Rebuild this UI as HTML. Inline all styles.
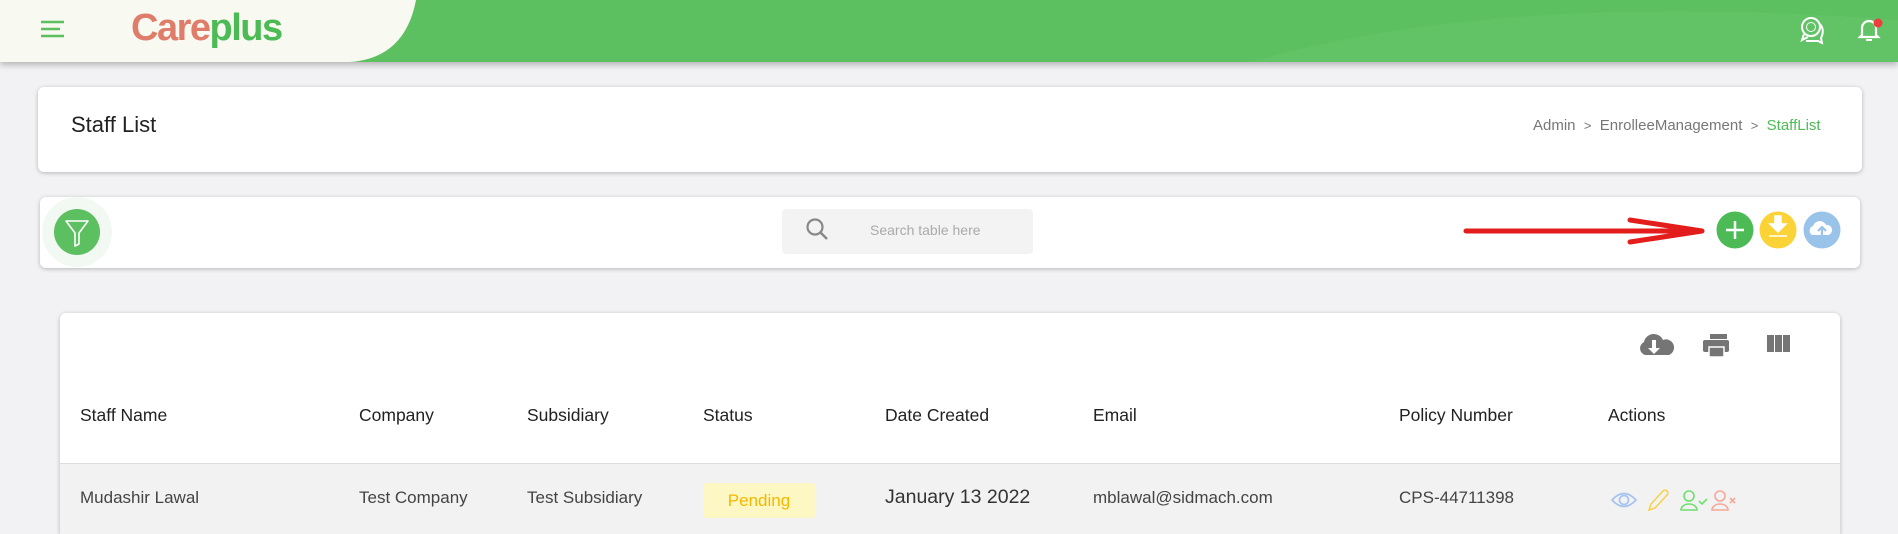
<!DOCTYPE html>
<html style="width:1898px;height:534px;overflow:hidden"><head><meta charset="utf-8"><style>
*{box-sizing:border-box;margin:0;padding:0}
body{width:1898px;height:534px;overflow:hidden;background:#f2f2f4;font-family:"Liberation Sans",sans-serif;position:relative;color:#222}
.abs{position:absolute}
.hdr{left:0;top:0;width:1898px;height:62px;background:#5cbf60;box-shadow:0 3px 6px rgba(0,0,0,.25)}
.card{background:#fff;border-radius:6px;box-shadow:0 1px 4px rgba(0,0,0,.25)}
.th{top:405px;font-size:17.5px;color:#222}
.td{top:488px;font-size:17px;color:#444}
</style></head><body>
<div class="abs hdr">
 <svg class="abs" style="left:0;top:0" width="1898" height="62">
  <path d="M1250 62 Q1500 -10 1898 20 L1898 62Z" fill="#66c46a" opacity=".6"/>
  <path d="M0 0 H416 Q405 58 350 62 H0Z" fill="#f8f9f0"/>
  <g stroke="#5cbf60" stroke-width="2.5"><line x1="41" y1="22" x2="64" y2="22"/><line x1="41" y1="29" x2="60" y2="29"/><line x1="41" y1="36" x2="64" y2="36"/></g>
  <g fill="none" stroke="#fff" stroke-width="2"><circle cx="1811" cy="27" r="9"/><path d="M1804 34 l-2 6 6-3"/><path d="M1820 24 q5 6 1 14 l1 5 -4 -2 h-12"/><circle cx="1811" cy="27" r="4.5" stroke-width="1"/></g>
  <path d="M1862 35 v-7 a7 7 0 0 1 14 0 v7 l2 2 h-18z" fill="none" stroke="#fff" stroke-width="2.2"/>
  <line x1="1866" y1="40" x2="1872" y2="40" stroke="#fff" stroke-width="2"/>
  <circle cx="1878" cy="23" r="4.5" fill="#f03c3c"/>
 </svg>
 <div class="abs" style="left:131px;top:7px;font-size:38px;font-weight:bold;letter-spacing:-1.5px"><span style="color:#e07d6a">Care</span><span style="color:#4cba55">plus</span></div>
</div>

<div class="abs card" style="left:38px;top:87px;width:1824px;height:85px"></div>
<div class="abs" style="left:71px;top:112px;font-size:22px;color:#222">Staff List</div>
<div class="abs" style="left:1533px;top:117px;font-size:15px;color:#777">Admin &nbsp;<span style="font-size:13px">&gt;</span>&nbsp; EnrolleeManagement &nbsp;<span style="font-size:13px">&gt;</span>&nbsp; <span style="color:#4cba55">StaffList</span></div>

<div class="abs card" style="left:40px;top:197px;width:1820px;height:71px"></div>
<svg class="abs" style="left:0;top:190px" width="1898" height="90">
 <circle cx="77" cy="42" r="35" fill="#f2f8f2"/>
 <circle cx="77" cy="42" r="23" fill="#5cbf60"/>
 <path d="M66 31 H88 L79 43 V54 L75 56 V43Z" fill="none" stroke="#fff" stroke-width="1.6" stroke-linejoin="round"/>
 <rect x="782" y="19" width="251" height="45" rx="4" fill="#f3f3f3"/>
 <circle cx="815" cy="37" r="7.5" fill="none" stroke="#888" stroke-width="2.2"/><line x1="820" y1="42" x2="827" y2="49" stroke="#888" stroke-width="2.5"/>
 <text x="870" y="45" font-family="Liberation Sans" font-size="14" fill="#aaa">Search table here</text>
 <path d="M1466 41 L1702 41 M1630 30 L1702 41 L1630 52" fill="none" stroke="#e31c1c" stroke-width="5" stroke-linecap="round" stroke-linejoin="round"/>
 <circle cx="1735" cy="40" r="18.5" fill="#4cba55"/><path d="M1735 31 v18 M1726 40 h18" stroke="#fff" stroke-width="2.5"/>
 <circle cx="1778" cy="40" r="18.5" fill="#fcd337"/><path d="M1775 26 h6 v8 h5 l-8 8 -8 -8 h5z M1769 46 h18" fill="#fff" stroke="#fff" stroke-width="1.5"/>
 <circle cx="1822" cy="40" r="18.5" fill="#9ac3ea"/><path d="M1812 45 a5 5 0 0 1 1 -9 a7 7 0 0 1 13 -1 a5 5 0 0 1 2 10 z" fill="#fff"/><path d="M1822 47 v-9 M1818 41 l4 -4 4 4" stroke="#9ac3ea" stroke-width="2.2" fill="none"/>
</svg>

<div class="abs card" style="left:60px;top:313px;width:1780px;height:221px;border-bottom-left-radius:0;border-bottom-right-radius:0"></div>
<div class="abs" style="left:60px;top:463px;width:1780px;height:71px;background:#f2f2f2;border-top:1px solid #ddd"></div>
<svg class="abs" style="left:1620px;top:325px" width="200" height="40">
 <path d="M25 30 a7 7 0 0 1 -1 -13 a10 10 0 0 1 19 -2 a7 7 0 0 1 6 15z" fill="#757575"/>
 <path d="M32 15 v8 h-4 l6 6 6 -6 h-4 v-8z" fill="#fff"/>
 <rect x="90" y="9" width="17" height="5" fill="#757575"/><rect x="83" y="15" width="26" height="12" rx="2" fill="#757575"/><rect x="89" y="22" width="15" height="10" fill="#757575" stroke="#fff" stroke-width="1.5"/>
 <rect x="147" y="10" width="7" height="17" fill="#757575"/><rect x="155" y="10" width="7" height="17" fill="#757575"/><rect x="163" y="10" width="7" height="17" fill="#757575"/>
</svg>
<div class="abs th" style="left:80px">Staff Name</div>
<div class="abs th" style="left:359px">Company</div>
<div class="abs th" style="left:527px">Subsidiary</div>
<div class="abs th" style="left:703px">Status</div>
<div class="abs th" style="left:885px">Date Created</div>
<div class="abs th" style="left:1093px">Email</div>
<div class="abs th" style="left:1399px">Policy Number</div>
<div class="abs th" style="left:1608px">Actions</div>
<div class="abs td" style="left:80px">Mudashir Lawal</div>
<div class="abs td" style="left:359px">Test Company</div>
<div class="abs td" style="left:527px">Test Subsidiary</div>
<div class="abs" style="left:703px;top:483px;width:112px;height:35px;background:#fcf7c3;border-radius:3px;color:#f5b800;font-size:17px;text-align:center;line-height:35px">Pending</div>
<div class="abs td" style="left:885px;top:486px;font-size:19.5px;color:#333">January 13 2022</div>
<div class="abs td" style="left:1093px">mblawal@sidmach.com</div>
<div class="abs td" style="left:1399px">CPS-44711398</div>
<svg class="abs" style="left:1610px;top:488px" width="130" height="26">
 <path d="M2 12 Q14 -1 26 12 Q14 25 2 12Z" fill="none" stroke="#a6c4f0" stroke-width="1.7"/><circle cx="14" cy="12" r="4.5" fill="none" stroke="#a6c4f0" stroke-width="1.7"/>
 <path d="M39 22 l2 -6 12 -13 a2.5 2.5 0 0 1 4 4 l-12 13z" fill="none" stroke="#f7d24a" stroke-width="1.6"/>
 <circle cx="79" cy="8" r="5" fill="none" stroke="#6de06d" stroke-width="1.6"/><path d="M71 22 a8 6 0 0 1 16 0z" fill="none" stroke="#6de06d" stroke-width="1.6"/><path d="M89 13 l3 3 5 -5" fill="none" stroke="#6de06d" stroke-width="1.6"/>
 <circle cx="110" cy="8" r="5" fill="none" stroke="#f5a898" stroke-width="1.6"/><path d="M102 22 a8 6 0 0 1 16 0z" fill="none" stroke="#f5a898" stroke-width="1.6"/><path d="M120 10 l5 5 M125 10 l-5 5" stroke="#f5a898" stroke-width="1.6"/>
</svg>
</body></html>
